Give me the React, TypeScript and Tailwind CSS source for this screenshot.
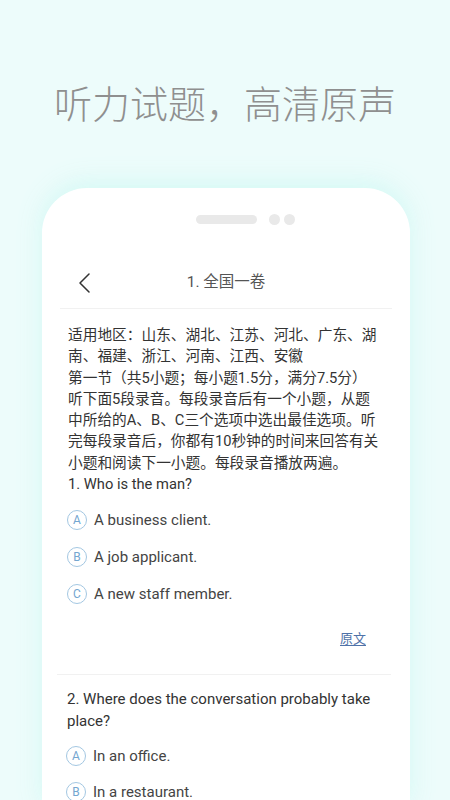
import { ReactNode } from 'react';

const font = { fontFamily: 'Roboto, "Noto Sans CJK SC", sans-serif' };

function Option({ letter, children, tall = true }: { letter: string; children: ReactNode; tall?: boolean }) {
  return (
    <div className={`flex items-center ${tall ? 'h-[37px]' : 'h-[36px]'}`}>
      <span className="w-[20px] h-[20px] rounded-full border border-[#a3c7e2] text-[#74a6d0] text-[12px] leading-none flex items-center justify-center shrink-0">
        {letter}
      </span>
      <span className="ml-[7px] text-[15px] text-[#444]">{children}</span>
    </div>
  );
}

export default function App() {
  return (
    <div className="h-[800px] w-[450px] overflow-hidden bg-[#edfcfb] flex flex-col" style={font}>
      <h1 className="pt-[86px] text-center text-[38px] leading-[38px] font-extralight text-[#8f8f8f]">
        听力试题，高清原声
      </h1>

      <div className="mt-[64px] ml-[42px] w-[368px] flex-1 bg-white rounded-t-[45px] shadow-[0_-6px_24px_rgba(210,248,244,0.9)] flex flex-col">
        {/* speaker + camera */}
        <div className="pt-[17px] pl-[154px] flex items-center h-[28px] box-content">
          <div className="w-[61px] h-[9px] rounded-full bg-[#e9e9e9]" />
          <div className="ml-[12px] w-[11px] h-[11px] rounded-full bg-[#e9e9e9]" />
          <div className="ml-[4px] w-[11px] h-[11px] rounded-full bg-[#e9e9e9]" />
        </div>

        {/* header */}
        <div className="mt-[25px] h-[50px] relative flex items-center justify-center">
          <svg className="absolute left-[36px] top-[15px]" width="12" height="20" viewBox="0 0 12 20" fill="none">
            <path d="M11 1L2 10l9 9" stroke="#333" strokeWidth="1.5" strokeLinecap="round" strokeLinejoin="round" />
          </svg>
          <span className="text-[15.5px] text-[#555]">1. 全国一卷</span>
        </div>
        <div className="mx-[18px] h-px bg-[#f1f1f1]" />

        {/* question 1 */}
        <div className="pt-[16px] pl-[26px]">
          <p className="w-[314px] text-[14.7px] leading-[21.3px] text-[#333]">
            适用地区：山东、湖北、江苏、河北、广东、湖南、福建、浙江、河南、江西、安徽
            <br />
            第一节（共5小题；每小题1.5分，满分7.5分）
            <br />
            听下面5段录音。每段录音后有一个小题，从题中所给的A、B、C三个选项中选出最佳选项。听完每段录音后，你都有10秒钟的时间来回答有关小题和阅读下一小题。每段录音播放两遍。
            <br />
            1. Who is the man?
          </p>
        </div>
        <div className="mt-[6px] pl-[25px]">
          <Option letter="A">A business client.</Option>
          <Option letter="B">A job applicant.</Option>
          <Option letter="C">A new staff member.</Option>
        </div>
        <div className="mt-[17px] pr-[44px] flex justify-end">
          <span className="text-[13px] leading-[20px] text-[#4f72a8] underline underline-offset-2">原文</span>
        </div>

        <div className="mt-[25px] ml-[15px] mr-[19px] h-px bg-[#f1f1f1]" />

        {/* question 2 */}
        <div className="pt-[14px] pl-[25px]">
          <p className="w-[316px] text-[15px] leading-[21.3px] text-[#333]">
            2. Where does the conversation probably take place?
          </p>
        </div>
        <div className="mt-[6px] pl-[24px]">
          <Option letter="A" tall={false}>In an office.</Option>
          <Option letter="B" tall={false}>In a restaurant.</Option>
        </div>
      </div>
    </div>
  );
}
